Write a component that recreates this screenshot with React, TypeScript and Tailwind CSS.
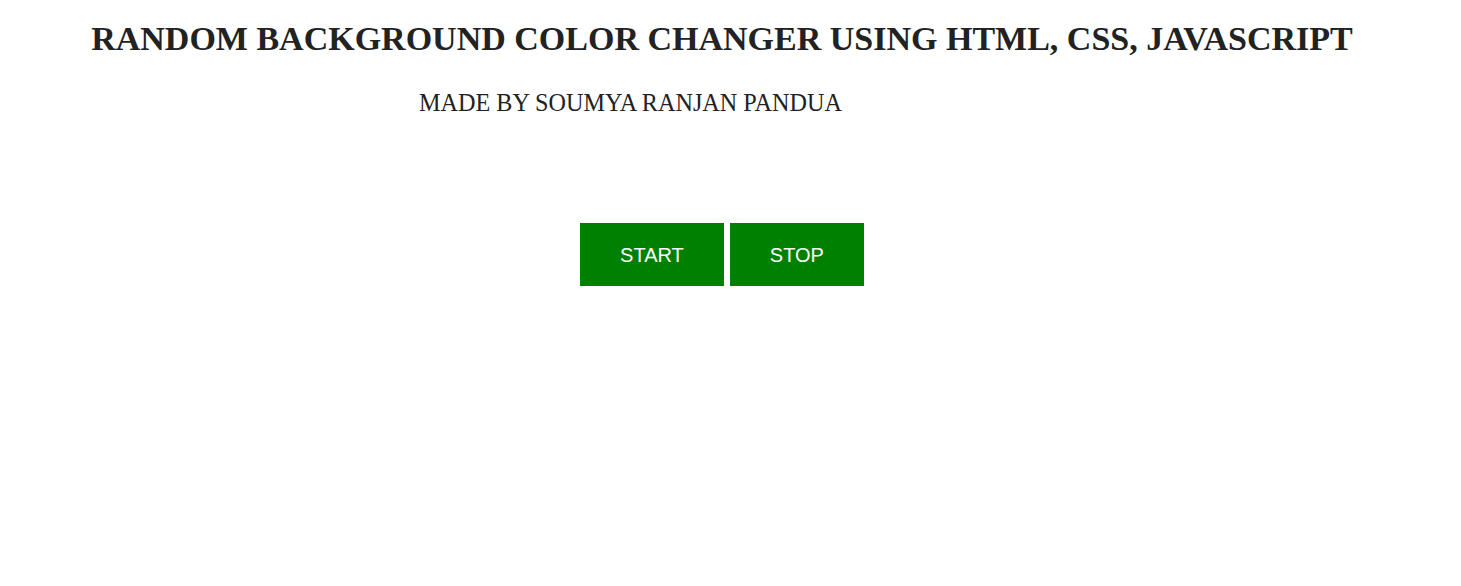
export default function App() {
  return (
    <div className="w-[1461px] h-[586px] bg-white font-['Liberation_Serif',serif] text-[#222]">
      <div className="w-[1444px] pt-[20px]">
        <h1 className="text-center text-[34px] font-bold leading-[38px]">
          RANDOM BACKGROUND COLOR CHANGER USING HTML, CSS, JAVASCRIPT
        </h1>
        <p className="pl-[419px] mt-[31px] text-[24.2px] leading-[28px]">MADE BY SOUMYA RANJAN PANDUA</p>
        <div className="mt-[106px] flex justify-center gap-[6px] font-['Liberation_Sans',sans-serif]">
          <button className="bg-[#008000] text-white text-[20px] px-[40px] h-[63px]">START</button>
          <button className="bg-[#008000] text-white text-[20px] px-[40px] h-[63px]">STOP</button>
        </div>
      </div>
    </div>
  );
}
